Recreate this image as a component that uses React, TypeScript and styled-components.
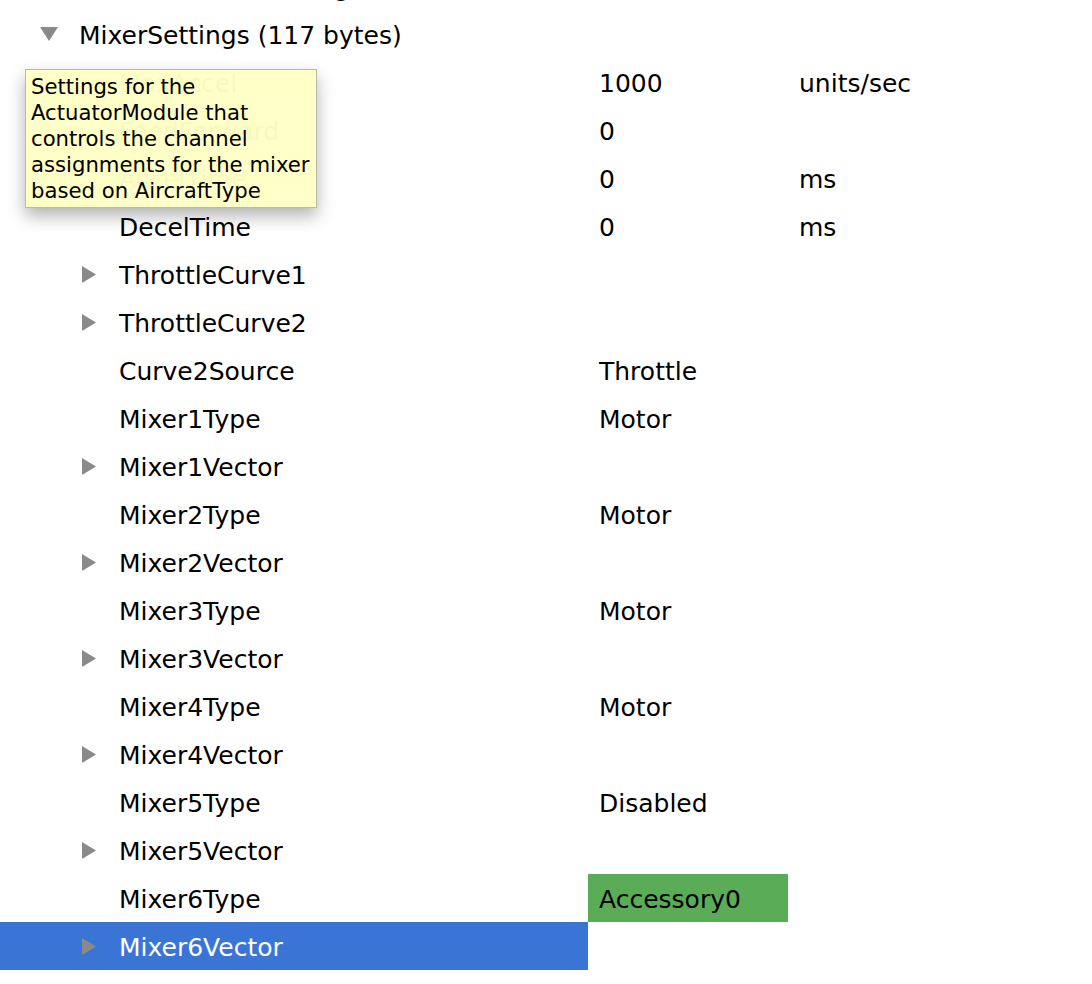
import React from 'react';
import styled, { createGlobalStyle } from 'styled-components';

const GlobalStyle = createGlobalStyle`
  html, body {
    margin: 0;
    padding: 0;
    background: #ffffff;
    overflow: hidden;
  }
  body {
    font-family: "DejaVu Sans", "Open Sans", sans-serif;
    color: #000;
  }
`;

const Page = styled.div`
  position: relative;
  width: 1092px;
  height: 984px;
  overflow: hidden;
  background: #fff;
`;

const Tree = styled.div`
  display: flex;
  flex-direction: column;
  margin-top: -38px;
`;

const Row = styled.div`
  display: grid;
  grid-template-columns: 588px 200px 1fr;
  height: 48px;
  flex-shrink: 0;
`;

const NameCell = styled.div<{ $level: number; $selected?: boolean }>`
  display: flex;
  align-items: center;
  padding-left: ${(p) => 39 + p.$level * 40}px;
  padding-top: 2px;
  background: ${(p) => (p.$selected ? '#3a75d6' : 'transparent')};
  color: ${(p) => (p.$selected ? '#fff' : '#000')};
  font-size: 25px;
  white-space: nowrap;
`;

const ArrowSlot = styled.span`
  width: 40px;
  flex-shrink: 0;
  display: flex;
  align-items: center;
  margin-top: -2px;
`;

const ValueCell = styled.div<{ $highlight?: boolean; $muted?: boolean }>`
  display: flex;
  align-items: center;
  padding-left: 11px;
  padding-top: 2px;
  font-size: 25px;
  white-space: nowrap;
  background: ${(p) => (p.$highlight ? '#5aac57' : 'transparent')};
  color: ${(p) => (p.$muted ? '#777' : '#000')};
`;

const UnitCell = styled.div`
  display: flex;
  align-items: center;
  padding-left: 11px;
  padding-top: 2px;
  font-size: 25px;
  white-space: nowrap;
`;

const Tooltip = styled.div`
  position: absolute;
  left: 25px;
  top: 69px;
  width: 282px;
  height: 133px;
  padding: 4px 3px 0 5px;
  box-sizing: content-box;
  background: rgba(255, 255, 198, 0.97);
  border: 1px solid #b9b9a8;
  box-shadow: 0 8px 16px rgba(0, 0, 0, 0.3);
  font-family: "DejaVu Sans", "Open Sans", sans-serif;
  font-size: 21.2px;
  line-height: 26px;
  color: #000;
  white-space: nowrap;
`;

const Arrow = ({ open }: { open?: boolean }) =>
  open ? (
    <svg width="18" height="14" viewBox="0 0 18 14" style={{ marginLeft: 1 }}>
      <polygon points="0,0 18,0 9,14" fill="#8a8a8a" />
    </svg>
  ) : (
    <svg width="14" height="17" viewBox="0 0 14 17" style={{ marginLeft: 3 }}>
      <polygon points="0,0 14,8.5 0,17" fill="#8a8a8a" />
    </svg>
  );

type Item = {
  name: string;
  level: number;
  arrow?: 'open' | 'closed';
  value?: string;
  unit?: string;
  selected?: boolean;
  highlight?: boolean;
  muted?: boolean;
};

const items: Item[] = [
  { name: 'ManualControlSettings', level: 0, arrow: 'closed' },
  { name: 'MixerSettings (117 bytes)', level: 0, arrow: 'open' },
  { name: 'MaxAccel', level: 1, value: '1000', unit: 'units/sec' },
  { name: 'FeedForward', level: 1, value: '0' },
  { name: 'AccelTime', level: 1, value: '0', unit: 'ms' },
  { name: 'DecelTime', level: 1, value: '0', unit: 'ms' },
  { name: 'ThrottleCurve1', level: 1, arrow: 'closed' },
  { name: 'ThrottleCurve2', level: 1, arrow: 'closed' },
  { name: 'Curve2Source', level: 1, value: 'Throttle' },
  { name: 'Mixer1Type', level: 1, value: 'Motor' },
  { name: 'Mixer1Vector', level: 1, arrow: 'closed' },
  { name: 'Mixer2Type', level: 1, value: 'Motor' },
  { name: 'Mixer2Vector', level: 1, arrow: 'closed' },
  { name: 'Mixer3Type', level: 1, value: 'Motor' },
  { name: 'Mixer3Vector', level: 1, arrow: 'closed' },
  { name: 'Mixer4Type', level: 1, value: 'Motor' },
  { name: 'Mixer4Vector', level: 1, arrow: 'closed' },
  { name: 'Mixer5Type', level: 1, value: 'Disabled' },
  { name: 'Mixer5Vector', level: 1, arrow: 'closed' },
  { name: 'Mixer6Type', level: 1, value: 'Accessory0', highlight: true },
  { name: 'Mixer6Vector', level: 1, arrow: 'closed', selected: true },
  { name: '', level: 1, value: '\u00a0\u00a0\u00a0\u00a0Enabled', muted: true },
];

export default function App() {
  return (
    <Page>
      <GlobalStyle />
      <Tree>
        {items.map((it, i) => (
          <Row key={i}>
            <NameCell $level={it.level} $selected={it.selected}>
              <ArrowSlot>{it.arrow && <Arrow open={it.arrow === 'open'} />}</ArrowSlot>
              {it.name}
            </NameCell>
            <ValueCell $highlight={it.highlight} $muted={it.muted}>
              {it.value}
            </ValueCell>
            <UnitCell>{it.unit}</UnitCell>
          </Row>
        ))}
      </Tree>
      <Tooltip>
        Settings for the
        <br />
        ActuatorModule that
        <br />
        controls the channel
        <br />
        assignments for the mixer
        <br />
        based on AircraftType
      </Tooltip>
    </Page>
  );
}
